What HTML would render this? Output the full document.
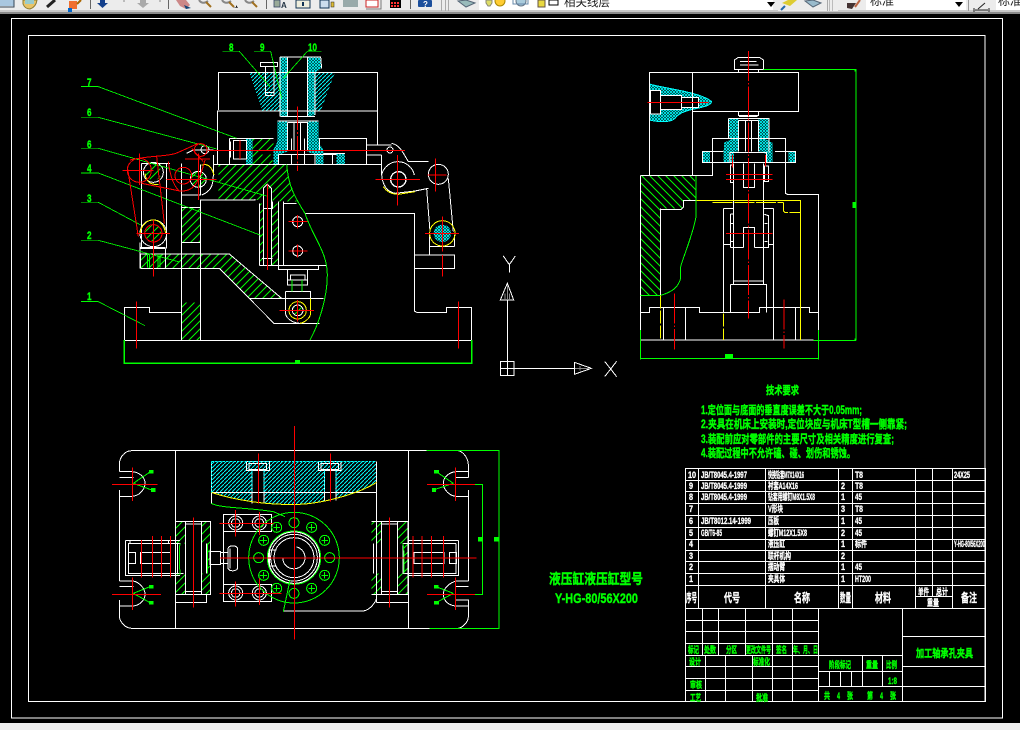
<!DOCTYPE html>
<html><head><meta charset="utf-8"><title>CAD</title>
<style>
html,body{margin:0;padding:0;background:#000;width:1020px;height:730px;overflow:hidden}
svg{display:block;position:absolute;left:0;top:0}
path.w,path.g,path.r,path.y,path.c,circle.w,circle.g,circle.r,circle.y{fill:none;stroke-width:3}
.w{stroke:#fff}.g{stroke:#0f0}.r{stroke:#f00}.y{stroke:#ff0}.c{stroke:#0ff}
.d{stroke-dasharray:70 6 6 6}
text{font-family:"Liberation Sans","Noto Sans CJK SC",sans-serif;font-weight:bold}
.tw text{fill:#fff;stroke:#fff;stroke-width:.35}
.tg text{fill:#0f0;stroke:#0f0;stroke-width:.4}
</style></head><body>
<svg width="1020" height="730" viewBox="0 0 1020 730" xmlns="http://www.w3.org/2000/svg">
<defs>
<pattern id="hg" width="24" height="24" patternUnits="userSpaceOnUse"><path d="M-2 26L26 -2M-2 2L2 -2M22 26L26 22" stroke="#0f0" stroke-width="3" fill="none"/></pattern>
<pattern id="hb" width="24" height="24" patternUnits="userSpaceOnUse"><path d="M-2 -2L26 26M22 -2L26 2M-2 22L2 26" stroke="#0f0" stroke-width="3" fill="none"/></pattern>
<pattern id="hc" width="9" height="9" patternUnits="userSpaceOnUse"><path d="M0 9L9 0M0 0L9 9" stroke="#0ff" stroke-width="2.400" fill="none"/></pattern>
<pattern id="hd" width="12" height="12" patternUnits="userSpaceOnUse"><path d="M-1 13L13 -1" stroke="#0ff" stroke-width="3" fill="none"/></pattern>
</defs>
<rect width="1020" height="730" fill="#000"/>

<!-- toolbar -->
<rect width="1020" height="11" fill="#ececec"/>
<rect y="10" width="1020" height="2" fill="#c8c8c8"/>
<rect y="12" width="1020" height="2" fill="#8a8a8a"/>
<rect x="0" y="0" width="14" height="6" fill="#a9c7e0"/><path d="M14 0V7H0" stroke="#345" fill="none"/>
<path d="M23 0V4Q25 9 30 9Q36 7 37 0Z" fill="#e8c468" stroke="#8a7a30"/><rect x="25" y="0" width="9" height="4" fill="#9cc"/>
<path d="M47 7L55 0" stroke="#222" stroke-width="3"/>
<rect x="69" y="1" width="8" height="8" fill="#f07030"/><rect x="68" y="8" width="4" height="4" fill="#06c"/><path d="M77 4L81 0" stroke="#a60" stroke-width="2"/>
<path d="M90.500 0V9" stroke="#666"/>
<path d="M100 0H105V3H108L102.500 8L97 3H100Z" fill="#14408c"/>
<path d="M140 0H146V3H149L143 8L137 3H140Z" fill="#aaa"/><rect x="123" y="0" width="2" height="2" fill="#bbb"/><rect x="159" y="0" width="2" height="2" fill="#bbb"/>
<path d="M168.500 0V9" stroke="#666"/>
<path d="M176 0H186L190 5L186 9L180 6Z" fill="#c88"/><path d="M184 5L191 8L186 9Z" fill="#147"/>
<g fill="none"><path d="M199 0Q202 5 208 1" stroke="#888" stroke-width="2"/><path d="M206 2L211 7" stroke-width="2" stroke="#a07020"/><path d="M222 0Q225 5 231 1" stroke="#888" stroke-width="2"/><path d="M229 2L234 7" stroke-width="2" stroke="#a07020"/><path d="M245 0Q248 5 254 1" stroke="#888" stroke-width="2"/><path d="M252 2L257 7" stroke-width="2" stroke="#a07020"/></g>
<path d="M233 7h3v-2l2 3z" fill="#000"/>
<path d="M266.500 0V9" stroke="#666"/>
<rect x="274" y="0" width="6" height="7" fill="#9a9" stroke="#346" stroke-width=".8"/><text x="281" y="8" font-size="8" fill="#234">A</text>
<rect x="296" y="0" width="14" height="8" fill="#eed" stroke="#135"/><rect x="302" y="2" width="2" height="4" fill="#135"/>
<rect x="320" y="0" width="9" height="8" fill="#cde" stroke="#135"/><rect x="331" y="2" width="3" height="5" fill="#db3" stroke="#222" stroke-width=".5"/>
<rect x="343" y="0" width="15" height="7" fill="#9aa"/>
<rect x="366" y="0" width="12" height="7" fill="#fff" stroke="#c22"/><path d="M381 0V9H366" stroke="#777" fill="none"/>
<rect x="390" y="0" width="11" height="8" fill="#000"/><g fill="#f33"><rect x="391" y="2" width="2" height="2"/><rect x="394" y="2" width="2" height="2"/><rect x="397" y="2" width="2" height="2"/><rect x="391" y="5" width="2" height="2"/><rect x="394" y="5" width="2" height="2"/><rect x="397" y="5" width="2" height="2"/></g>
<path d="M410.500 0V9" stroke="#666"/>
<rect x="418" y="0" width="14" height="7" rx="1" fill="#1c4f9c"/><text x="423" y="7" font-size="8" fill="#fff">?</text>
<path d="M441.500 0V11M445.500 0V11M448.500 0V11" stroke="#aaa"/>
<path d="M458 1L466 0L475 3L466 7Z" fill="#9bb" stroke="#567"/>
<rect x="479" y="0" width="294" height="10" fill="#fff"/>
<path d="M486 0H492V3L490 6H488L486 3Z" fill="#dd6" stroke="#887"/>
<circle cx="500" cy="1" r="5" fill="#fc3" stroke="#a80"/>
<circle cx="521" cy="1" r="5" fill="#acd" stroke="#678"/>
<path d="M513 0V4H528V0" stroke="#68a" fill="none"/>
<rect x="538" y="0" width="7" height="7" fill="#e8d840" stroke="#654"/>
<rect x="549" y="0" width="9" height="5" fill="#fff" stroke="#000"/>
<text x="564" y="6" font-size="12" fill="#222" style="font-weight:400" textLength="46" lengthAdjust="spacingAndGlyphs">相关线层</text>
<path d="M767 2H775L771 7Z" fill="#000"/>
<rect x="778" y="0" width="60" height="11" fill="#ececec"/>
<path d="M782 3L788 0H797L790 6Z" fill="#dc3"/><path d="M781 10L785 6" stroke="#26a" stroke-width="2"/>
<path d="M805 1L813 0L821 3L813 7Z" fill="#9bc" stroke="#567"/>
<path d="M827.500 0V11" stroke="#aaa"/><path d="M829.500 0V11M832.500 0V11" stroke="#bbb"/>
<path d="M847 3H856L852 9L847 8Z" fill="#433"/><path d="M855 7L860 0" stroke="#b64" stroke-width="2"/>
<rect x="866" y="0" width="100" height="10" fill="#fff"/>
<text x="870" y="5" font-size="12" fill="#222" style="font-weight:400">标准</text>
<path d="M955 2H963L959 7Z" fill="#000"/>
<path d="M968.500 0V11" stroke="#999"/>
<path d="M974 8V12M989 8V12M975 10H988M978 9L985 3" stroke="#222" fill="none"/>
<rect x="996" y="0" width="24" height="10" fill="#fff"/>
<text x="998" y="5" font-size="12" fill="#222" style="font-weight:400">标准</text>

<!-- bottom strip -->
<rect y="723" width="1020" height="7" fill="#f0f0f0"/>

<!-- frames -->
<g fill="none" stroke="#fff" stroke-width="1" shape-rendering="crispEdges">
<rect x="11.500" y="18.500" width="991" height="699.500"/>
<rect x="28.500" y="35.500" width="956.500" height="666"/>
</g>

<!-- MAIN VIEW -->
<g transform="translate(70,35) scale(.33333)" shape-rendering="crispEdges">
<path d="M538 112H630V230H578Z" fill="url(#hd)"/>
<path d="M735 112H795L752 228H735Z" fill="url(#hd)"/>
<path d="M630 66H652V245H632Z" fill="url(#hc)"/>
<path d="M712 66H752L755 100L735 112V240L712 245Z" fill="url(#hc)"/>
<path d="M622 258H652V350L625 360V388H610V345L622 320Z" fill="url(#hc)"/>
<path d="M712 258H745V320L760 345V388H738V360L712 350Z" fill="url(#hc)"/>
<path d="M528 310H548V388H528Z" fill="url(#hc)"/>
<path d="M800 355H825V388H800Z" fill="url(#hc)"/>
<path d="M548 310H610V345H568V388H548Z" fill="url(#hg)"/>
<path d="M566 358H608V388H566Z" fill="url(#hg)"/>
<path d="M445 388H650L656 425L680 500H608V460H578V495H445Z" fill="url(#hg)"/>
<path d="M335 517H392V622H335Z" fill="url(#hg)"/>
<path d="M335 802H392V915H335Z" fill="url(#hg)"/>
<path d="M212 657H478L635 790H540L448 700H212Z" fill="url(#hg)"/>
<path d="M568 505H580V692H568ZM604 505H625V692H604Z" fill="url(#hg)"/>
<circle cx="250" cy="595" r="24" fill="url(#hg)"/>
<circle cx="385" cy="433" r="24" fill="url(#hg)"/>
<circle cx="250" cy="412" r="24" fill="url(#hg)"/>
<circle cx="1117" cy="595" r="26" fill="url(#hc)"/>
<circle cx="683" cy="826" r="14" fill="url(#hg)"/>
<path class="w" d="M445 225V112H922V228M442 390V228H922V330"/>
<path class="w" d="M572 82H622V94H572ZM586 94V182H612V94M586 172H612"/>
<path class="w" d="M630 66H752L755 100M652 66V245M712 66V245M632 245H735M630 66V245M735 112V240"/>
<path class="w" d="M622 258H745M652 262H712V345M652 262V345M672 262V345M692 262V345"/>
<path class="w" d="M478 310H610M745 310H890V388M748 310V345M665 310V345M703 310V358M430 388H935M430 360V388M478 310V388M490 316H530V372H490ZM482 320V368"/>
<path class="w" d="M625 358H800M625 388V358M665 358V388M703 358V388M735 358V388M760 355H825M788 355V388"/>
<path class="w" d="M890 330H965M890 360H935"/>
<path class="w" d="M392 915V495H555V492M335 480V915M335 517H392M335 622H392"/>
<path class="w" d="M212 657H478L635 790M212 700H448L612 865H748M212 657V700M540 790H760"/>
<path class="w" d="M568 505V692M580 460V692H604V460L592 448ZM580 520H608V500M576 670H608M568 692H770M625 500V692M640 500V692M640 505H680"/>
<path class="w" d="M625 692H745V703H625ZM653 703H712V735M653 703V735M653 750H712V735H653ZM662 720H705V735H662Z"/>
<path class="w" d="M646 770H722V790M646 770V835C650 855 675 865 690 865"/>
<circle class="w" cx="683" cy="560" r="15"/><circle class="w" cx="683" cy="648" r="15"/>
<circle class="y" cx="683" cy="826" r="26"/>
<circle class="w" cx="683" cy="826" r="16"/>
<path class="y" d="M722 790V835C720 850 705 862 690 865"/>
<path class="w" d="M163 915V818H238V832H335M1205 915V818H1130V832H1040L1033 828V535H705M163 916H1205M1033 660H1153V700H1033"/>
<path class="w" d="M1078 660V635H1153M1078 635V600M1153 635V600"/>
<path class="w" d="M935 360V420C938 450 950 470 975 475L1035 468L1075 460M1070 462L1080 590M1135 430L1150 590M965 325C990 330 1000 355 1015 380H1075"/>
<circle class="w" cx="1105" cy="418" r="30"/>
<path class="w" d="M935 420A50 50 0 0 1 1033 420"/>
<circle class="w" cx="985" cy="433" r="23" style="stroke-width:4"/>
<circle class="w" cx="960" cy="345" r="9"/>
<circle class="y" cx="1117" cy="595" r="38"/>
<path class="y" d="M940 455C950 470 965 478 985 478L1035 470"/>
<path class="w" d="M215 385H300M215 385V640M290 385V640M210 640V700M287 640V700M210 622V640H287M210 637H287"/>
<path class="w" d="M335 385V480H392V388M350 355L370 345H430M395 480C420 470 430 455 430 420V388"/>
<circle class="w" cx="250" cy="412" r="30"/><circle class="w" cx="385" cy="433" r="24"/><circle class="w" cx="250" cy="595" r="40"/><circle class="w" cx="405" cy="344" r="12"/>
<path class="y" d="M225 415C228 440 240 450 265 448M210 595C215 565 235 555 250 555C268 555 283 570 287 595M395 390C415 385 425 395 432 420"/>
<path class="g" d="M650 388C655 450 670 480 705 535C730 610 772 650 772 720C772 790 745 870 720 915"/>
<path class="g" d="M232 657V697M238 657V697M264 657V697M270 657V697"/>
<path class="g" d="M666 735V770M696 735V770"/>
<path class="g" d="M457 49H508L600 155M552 49H602L635 190M755 49H712L640 130M33 155H85L500 310M33 247H85L440 342M33 340H85L590 483M33 414H85L575 602M33 502H85L212 570M33 616H85L325 680M33 800H85L225 872" style="stroke-width:2.500"/>
<path class="g" d="M163 915V985H1205V915" style="stroke-width:4"/>
<rect x="675" y="975" width="15" height="10" fill="#0f0"/>
<path class="r d" d="M682 215V408"/>
<path class="r" d="M415 346H1005"/>
<path class="r" d="M510 316V372M592 448V705"/>
<path class="r" d="M655 560H712M683 540V580M655 648H712M683 628V668"/>
<path class="r" d="M628 826H732M683 795V860"/>
<path class="r" d="M200 800V940M1165 800V940"/>
<path class="r" d="M916 433H1050M982 360V512"/>
<path class="r" d="M1073 420H1130M1097 370V470"/>
<path class="r" d="M1065 595H1167M1117 545V650M1117 660V725"/>
<path class="r" d="M250 640V725M250 555V640M200 595H300"/>
<path class="r" d="M157 406H250M208 355V450"/>
<path class="r" d="M290 433H440M385 355V495"/>
<circle class="r" cx="250" cy="595" r="26"/>
<circle class="r" cx="208" cy="406" r="36"/>
<circle class="r" cx="340" cy="422" r="25"/>
<circle class="r" cx="392" cy="345" r="19"/>
<path class="r" d="M172 395L205 605M260 365L283 565M180 375C230 362 300 365 325 352L385 325M215 445L330 468C370 470 385 450 405 375M295 380C300 420 310 450 325 465M365 340L400 380M345 372H420"/>
</g>
<g class="tg" font-size="11">
<text x="229" y="51" textLength="4.500" lengthAdjust="spacingAndGlyphs">8</text>
<text x="260" y="51" textLength="4.500" lengthAdjust="spacingAndGlyphs">9</text>
<text x="308" y="51" textLength="9" lengthAdjust="spacingAndGlyphs">10</text>
<text x="87" y="86" textLength="4.500" lengthAdjust="spacingAndGlyphs">7</text>
<text x="87" y="116" textLength="4.500" lengthAdjust="spacingAndGlyphs">6</text>
<text x="87" y="148" textLength="4.500" lengthAdjust="spacingAndGlyphs">6</text>
<text x="87" y="172" textLength="4.500" lengthAdjust="spacingAndGlyphs">4</text>
<text x="87" y="202" textLength="4.500" lengthAdjust="spacingAndGlyphs">3</text>
<text x="87" y="239" textLength="4.500" lengthAdjust="spacingAndGlyphs">2</text>
<text x="87" y="300" textLength="4.500" lengthAdjust="spacingAndGlyphs">1</text>
</g>

<!-- RIGHT VIEW -->
<g transform="translate(620,50) scale(.33333)" shape-rendering="crispEdges">
<path d="M88 102C130 115 240 125 275 155C265 180 190 170 165 205C150 220 110 215 88 210Z" fill="url(#hc)"/>
<path d="M122 137H184V178H122ZM184 142H236V172H184ZM92 122H122V192H92Z" fill="#000"/>
<path d="M326 205H356V305H342V270L326 265Z" fill="url(#hc)"/>
<path d="M415 205H447V265L430 270V305H415Z" fill="url(#hc)"/>
<path d="M312 278L342 265V338H310Z" fill="url(#hc)"/><path d="M430 265L458 278V338H440V310H430Z" fill="url(#hc)"/>
<path d="M247 304H270V338H247ZM505 304H527V338H505Z" fill="url(#hc)"/>
<path d="M61 376H225V400L230 450H190V476H122V736H61Z" fill="url(#hb)"/>
<path class="c" d="M88 102C130 115 240 125 275 155C265 180 190 170 165 205C150 220 110 215 88 210"/>
<path class="w" d="M343 30L355 22H418L430 30V58H343ZM355 58V67M415 58V67M360 45H415M360 35H410"/>
<path class="w" d="M88 376V67H535V184H217M217 67V376M61 376H278V338H330M122 137H184V178H122M184 142H236V172H184M92 122H122V192H92Z"/>
<path class="w" d="M355 184V197H415V184M357 200H413"/>
<path class="w" d="M326 205H447V308M326 205V265M356 212H415M356 212V305M376 212V305M394 212V305M415 212V305"/>
<path class="w" d="M278 338V265H496V430L502 433H595V870M278 304H247V338H527V304H465M278 304H310M496 304H505M330 338V308H440V338"/>
<path class="w" d="M61 376V870M61 870H580"/>
<path class="w" d="M61 787H88V772H238V787H418V772H568V787H595M130 772V870M196 772V870M460 475V870M526 772V870"/>
<path class="w" d="M310 475H340M310 475V787M460 475H430M340 340V693M430 340V693M340 693H430V703M340 703V693M331 703H440V787M331 703V787"/>
<path class="w" d="M370 340V412H404V340M370 593V532H404V593M331 593H370M404 593H446V497L433 493M331 492V593M310 583H331M446 583H460M340 492H331M340 520H331M340 575H331M433 520H442M433 575H442"/>
<path class="w" d="M331 345H340V398H331ZM433 348H446V395H433Z"/>
<path class="w" d="M122 476V736M122 478H184L190 472V451H230"/>
<path class="g" d="M228 378V500C220 550 190 620 182 650V685C175 710 160 725 122 736M61 736H122"/>
<path class="y" d="M230 451H541V870M271 452H500M278 457H490" stroke-dasharray="60 5"/>
<path class="y" d="M230 451H380"/>
<path class="y" d="M122 736V870M310 790V870M490 458V482L494 487H541" stroke-dasharray="40 5"/>
<path class="y" d="M505 451H541M541 451V870" stroke-dasharray="90 5"/>
<path class="r" d="M385 3V805" stroke-dasharray="90 6 5 6"/>
<path class="r" d="M163 730V898M492 748V895" stroke-dasharray="90 6 5 6"/>
<path class="r" d="M82 157H265M318 373H458M318 388H458M318 550H458M338 315V352M437 315V350"/>
<path class="g" d="M430 58H708V868M580 871H708M61 840V928M595 840V928M61 925H595"/>
<rect x="315" y="912" width="24" height="13" fill="#0f0"/>
<rect x="697" y="456" width="9" height="18" fill="#0f0"/>
<rect x="704" y="58" width="6" height="6" fill="#0f0"/><rect x="704" y="865" width="6" height="6" fill="#0f0"/>
</g>

<!-- BOTTOM VIEW -->
<g transform="translate(100,420) scale(.33333)" shape-rendering="crispEdges">
<path d="M334 124H830V187C770 225 650 255 580 253C500 255 400 240 334 217Z" fill="url(#hd)"/>
<path d="M456 152H492V250H456ZM674 152H708V242H674Z" fill="#000"/>
<path d="M227 304H257V524H227ZM304 304H332V524H304ZM814 304H844V524H814ZM893 304H924V524H893Z" fill="url(#hg)"/>
<path d="M227 370H257V460H227ZM814 370H844V460H814ZM893 370H909V460H893ZM304 370H322V460H304Z" fill="#000"/>
<path class="w" d="M58 155V130C60 110 75 92 95 92H1075C1090 95 1105 115 1105 135V172M58 155H95C115 155 135 170 135 190C135 210 115 229 95 229H58V210M58 172H100M58 229V210M1105 155H1070C1050 155 1030 170 1030 190C1030 210 1050 229 1070 229H1105V210M1065 172H1105"/>
<path class="w" d="M58 229V483M1105 229V483"/>
<path class="w" d="M58 483H100C118 487 135 505 135 522C135 545 115 558 95 558H58V540M58 500H100M58 558V590C60 605 75 625 95 625H1075C1090 622 1105 605 1105 590V540H1065M1105 483H1070C1050 487 1030 505 1030 522C1030 545 1050 558 1070 558H1105V540M1065 500H1105"/>
<path class="w" d="M227 92V625M925 92V625"/>
<path class="w" d="M334 124V250M334 217H830M830 124V217M830 187V530C830 545 810 570 790 573H550M440 124H508V152H440ZM655 124H723V152H655ZM447 130H500V148H447ZM663 130H715V148H663ZM456 152V250M492 152V250M674 152V242M708 152V242M456 217H492M674 217H708"/>
<path class="w" d="M227 304H332V524H227M257 304V524M304 304V524M257 312H304M257 515H304M227 370H242M320 370V460M227 460H250M227 524V548H320V524"/>
<path class="w" d="M814 304H924V524H814M844 304V524M893 304V524M844 312H893M844 515H893M924 370H909V460H924M820 370V460M830 548H924M830 524V548"/>
<path class="w" d="M76 361H240M76 361V467H240M85 370H232V460H85ZM85 397H107V430H85ZM122 397H212V430H122ZM160 461H225M90 361V370M205 361V370"/>
<path class="w" d="M1076 361H925M1076 361V467H925M1068 370H925M1068 370V460H925M1048 397H1070V430H1048ZM942 397H1032V430H942ZM960 461H1040"/>
<path class="w" d="M330 394H362V434H330ZM362 398H384V430H362ZM384 385C388 375 408 375 413 385V445C408 455 388 455 384 445ZM390 385V445"/>
<path class="w" d="M370 283H515V335H370ZM370 335V493M370 493H515V545H370Z"/>
<circle class="w" cx="407" cy="309" r="21"/><circle class="w" cx="407" cy="309" r="13"/>
<circle class="w" cx="478" cy="309" r="21"/><circle class="w" cx="478" cy="309" r="13"/>
<circle class="w" cx="407" cy="519" r="21"/><circle class="w" cx="407" cy="519" r="13"/>
<circle class="w" cx="478" cy="519" r="21"/><circle class="w" cx="478" cy="519" r="13"/>
<circle class="w" cx="582" cy="413" r="77"/><circle class="w" cx="582" cy="413" r="70"/><circle class="w" cx="582" cy="413" r="60"/>
<path class="w" d="M548 413A33 33 0 0 0 615 413A33 33 0 0 0 590 381"/>
<path class="w" d="M508 390H530M508 390V438H530"/>
<path class="y" d="M334 217C400 240 500 255 580 253C650 255 770 225 830 187"/>
<path class="c" d="M334 124H830M334 124V217M456 152V217M674 152V217M492 152V217M708 152V217" style="stroke-dasharray:8 3"/>
<path class="g" d="M334 250C360 265 440 262 520 275L555 290"/>
<circle class="g" cx="582" cy="413" r="136"/><circle class="g" cx="582" cy="413" r="80"/>
<circle class="g" cx="582" cy="308" r="15"/><circle class="g" cx="635" cy="322" r="15"/><circle class="g" cx="674" cy="361" r="15"/><circle class="g" cx="689" cy="413" r="15"/><circle class="g" cx="674" cy="466" r="15"/><circle class="g" cx="635" cy="505" r="15"/><circle class="g" cx="582" cy="520" r="15"/><circle class="g" cx="530" cy="505" r="15"/><circle class="g" cx="491" cy="466" r="15"/><circle class="g" cx="476" cy="413" r="15"/><circle class="g" cx="491" cy="361" r="15"/><circle class="g" cx="530" cy="322" r="15"/>
<path class="g" d="M625 322H645M635 312V332M664 361H684M674 351V371M479 361H501M491 351V371M479 466H501M491 456V476M664 466H684M674 456V476M625 505H645M635 495V515M520 505H540M530 495V515M520 322H540M530 312V332"/>
<path class="g" d="M550 575L570 480M240 370C235 410 240 450 240 465M322 370V460M909 370C915 410 912 450 912 460"/>
<path class="g" d="M980 92H1197V625H988M1125 193H1148V523H1125"/>
<rect x="1134" y="351" width="14" height="14" fill="#0f0"/><rect x="1182" y="351" width="14" height="14" fill="#0f0"/>
<path class="g" d="M100 190L150 156M100 190L155 210M100 520L150 500M100 520L150 548M1060 190L1010 156M1060 190L1000 210M1060 520L1008 500M1060 520L1008 548"/>
<g fill="#0f0"><rect x="147" y="150" width="13" height="11"/><rect x="153" y="204" width="14" height="12"/><rect x="147" y="495" width="13" height="11"/><rect x="147" y="543" width="13" height="11"/><rect x="1002" y="150" width="15" height="11"/><rect x="996" y="204" width="12" height="12"/><rect x="1002" y="495" width="14" height="11"/><rect x="1002" y="543" width="15" height="11"/></g>
<path class="r" d="M583 18V658M475 100V250M691 100V245M360 414H1130M36 193H173M97 143V243M36 523H183M97 472V570M981 193H1125M1066 143V243M981 523H1125M1066 472V570"/>
<path class="r" d="M280 292V562M868 292V562M124 360V473M157 348V473M184 348V473M211 348V473M939 348V473M966 348V473M994 348V473M1030 348V473"/>
<path class="r" d="M358 310H456M407 270V350M440 310H520M478 276V345M358 520H456M407 484V560M440 520H545M478 476V555"/>
</g>

<!-- UCS icon -->
<g transform="translate(490,240) scale(.33333)" shape-rendering="crispEdges">
<path class="w" d="M52 180V364M72 385H252M31 364H72V407H31ZM31 385H72M52 364V407"/>
<path class="w" d="M52 130L31 180H71ZM253 367V403L304 385Z"/>
<path d="M52 135V180M45 160V180M59 160V180M255 385H300M270 378V392" stroke="#888" stroke-width="3" fill="none"/>
<path class="w" d="M40 48L58 74L76 48M58 74V98M344 364L380 410M380 364L344 410"/>
</g>

<!-- tech text -->
<g class="tg">
<text x="766" y="394" font-size="11" textLength="33" lengthAdjust="spacingAndGlyphs">技术要求</text>
<text x="701" y="414" font-size="11.500" textLength="161" lengthAdjust="spacingAndGlyphs">1.定位面与底面的垂直度误差不大于0.05mm;</text>
<text x="701" y="428" font-size="11.500" textLength="206" lengthAdjust="spacingAndGlyphs">2.夹具在机床上安装时,定位块应与机床T型槽一侧靠紧;</text>
<text x="701" y="443" font-size="11.500" textLength="193" lengthAdjust="spacingAndGlyphs">3.装配前应对零部件的主要尺寸及相关精度进行复查;</text>
<text x="701" y="457" font-size="11.500" textLength="154" lengthAdjust="spacingAndGlyphs">4.装配过程中不允许磕、碰、划伤和锈蚀。</text>
<text x="549" y="584" font-size="14" textLength="94" lengthAdjust="spacingAndGlyphs">液压缸液压缸型号</text>
<text x="555" y="603" font-size="14" textLength="83" lengthAdjust="spacingAndGlyphs">Y-HG-80/56X200</text>
</g>

<!-- TABLE -->
<g fill="none" stroke="#fff" stroke-width="1" shape-rendering="crispEdges">
<path d="M685.500 468.500H985.500V701.500H685.500Z"/>
<path d="M685.500 480.500H985.500M685.500 491.500H985.500M685.500 503.500H985.500M685.500 515.500H985.500M685.500 527.500H985.500M685.500 539.500H985.500M685.500 550.500H985.500M685.500 561.500H985.500M685.500 573.500H985.500M685.500 585.500H985.500M685.500 608.500H985.500"/>
<path d="M698.500 468.500V608.500M765.500 468.500V608.500M838.500 468.500V608.500M852.500 468.500V608.500M915.500 468.500V608.500M932.500 468.500V596.500M952.500 468.500V608.500M915.500 596.500H952.500"/>
<path d="M702.500 608.500V655.500M718.500 608.500V655.500M745.500 608.500V655.500M772.500 608.500V655.500M792.500 608.500V655.500"/>
<path d="M685.500 620.500H818.500M685.500 631.500H818.500M685.500 643.500H818.500M685.500 655.500H902.500M685.500 666.500H818.500M685.500 678.500H818.500M685.500 690.500H818.500"/>
<path d="M705.500 655.500V701.500M725.500 655.500V701.500M752.500 655.500V701.500M772.500 655.500V701.500M792.500 655.500V701.500M818.500 608.500V701.500"/>
<path d="M818.500 671.500H902.500M818.500 686.500H902.500M862.500 655.500V686.500M882.500 655.500V686.500M829.500 671.500V686.500M840.500 671.500V686.500M851.500 671.500V686.500"/>
<path d="M902.500 608.500V701.500M902.500 636.500H985.500M902.500 666.500H985.500M902.500 686.500H985.500"/>
</g>
<g class="tw" font-size="9">
<text x="688" y="478" textLength="8" lengthAdjust="spacingAndGlyphs">10</text>
<text x="689" y="489" textLength="4" lengthAdjust="spacingAndGlyphs">9</text><text x="689" y="500" textLength="4" lengthAdjust="spacingAndGlyphs">8</text><text x="689" y="512" textLength="4" lengthAdjust="spacingAndGlyphs">7</text><text x="689" y="524" textLength="4" lengthAdjust="spacingAndGlyphs">6</text><text x="689" y="536" textLength="4" lengthAdjust="spacingAndGlyphs">5</text><text x="689" y="547" textLength="4" lengthAdjust="spacingAndGlyphs">4</text><text x="689" y="559" textLength="4" lengthAdjust="spacingAndGlyphs">3</text><text x="689" y="570" textLength="4" lengthAdjust="spacingAndGlyphs">2</text><text x="689" y="582" textLength="4" lengthAdjust="spacingAndGlyphs">1</text>
<text x="701" y="478" textLength="46" lengthAdjust="spacingAndGlyphs">JB/T8045.4-1997</text>
<text x="701" y="489" textLength="46" lengthAdjust="spacingAndGlyphs">JB/T8045.4-1999</text>
<text x="701" y="500" textLength="46" lengthAdjust="spacingAndGlyphs">JB/T8045.4-1999</text>
<text x="701" y="524" textLength="50" lengthAdjust="spacingAndGlyphs">JB/T8012.14-1999</text>
<text x="701" y="536" textLength="21" lengthAdjust="spacingAndGlyphs">GB/T6-85</text>
<text x="768" y="478" textLength="36" lengthAdjust="spacingAndGlyphs">快换钻套M7X14X16</text>
<text x="768" y="489" textLength="30" lengthAdjust="spacingAndGlyphs">衬套A14X16</text>
<text x="768" y="500" textLength="47" lengthAdjust="spacingAndGlyphs">钻套用螺钉M8X1.5X8</text>
<text x="768" y="512" textLength="15" lengthAdjust="spacingAndGlyphs">V形块</text>
<text x="768" y="524" textLength="11" lengthAdjust="spacingAndGlyphs">压板</text>
<text x="768" y="536" textLength="39" lengthAdjust="spacingAndGlyphs">螺钉M12X1.5X8</text>
<text x="768" y="547" textLength="17" lengthAdjust="spacingAndGlyphs">液压缸</text>
<text x="768" y="559" textLength="23" lengthAdjust="spacingAndGlyphs">联杆机构</text>
<text x="768" y="570" textLength="17" lengthAdjust="spacingAndGlyphs">摆动臂</text>
<text x="768" y="582" textLength="17" lengthAdjust="spacingAndGlyphs">夹具体</text>
<text x="841" y="489" textLength="4" lengthAdjust="spacingAndGlyphs">2</text><text x="841" y="500" textLength="4" lengthAdjust="spacingAndGlyphs">1</text><text x="841" y="512" textLength="4" lengthAdjust="spacingAndGlyphs">3</text><text x="841" y="524" textLength="4" lengthAdjust="spacingAndGlyphs">1</text><text x="841" y="536" textLength="4" lengthAdjust="spacingAndGlyphs">2</text><text x="841" y="547" textLength="4" lengthAdjust="spacingAndGlyphs">1</text><text x="841" y="559" textLength="4" lengthAdjust="spacingAndGlyphs">2</text><text x="841" y="570" textLength="4" lengthAdjust="spacingAndGlyphs">1</text><text x="841" y="582" textLength="4" lengthAdjust="spacingAndGlyphs">1</text>
<text x="855" y="478" textLength="8" lengthAdjust="spacingAndGlyphs">T8</text>
<text x="855" y="489" textLength="8" lengthAdjust="spacingAndGlyphs">T8</text>
<text x="855" y="500" textLength="7" lengthAdjust="spacingAndGlyphs">45</text>
<text x="855" y="512" textLength="8" lengthAdjust="spacingAndGlyphs">T8</text>
<text x="855" y="524" textLength="7" lengthAdjust="spacingAndGlyphs">45</text>
<text x="855" y="536" textLength="7" lengthAdjust="spacingAndGlyphs">45</text>
<text x="855" y="547" textLength="12" lengthAdjust="spacingAndGlyphs">标件</text>
<text x="855" y="570" textLength="7" lengthAdjust="spacingAndGlyphs">45</text>
<text x="855" y="582" textLength="16" lengthAdjust="spacingAndGlyphs">HT200</text>
<text x="954" y="478" textLength="16" lengthAdjust="spacingAndGlyphs">24X25</text>
<text x="954" y="547" textLength="31" lengthAdjust="spacingAndGlyphs">Y-HG-80/56X200</text>
<text x="686" y="602" font-size="12" textLength="11" lengthAdjust="spacingAndGlyphs">序号</text>
<text x="724" y="602" font-size="12" textLength="16" lengthAdjust="spacingAndGlyphs">代号</text>
<text x="794" y="602" font-size="12" textLength="16" lengthAdjust="spacingAndGlyphs">名称</text>
<text x="840" y="602" font-size="12" textLength="11" lengthAdjust="spacingAndGlyphs">数量</text>
<text x="875" y="602" font-size="12" textLength="16" lengthAdjust="spacingAndGlyphs">材料</text>
<text x="918" y="595" font-size="9" textLength="11" lengthAdjust="spacingAndGlyphs">单件</text>
<text x="936" y="595" font-size="9" textLength="12" lengthAdjust="spacingAndGlyphs">总计</text>
<text x="927" y="606" font-size="9" textLength="12" lengthAdjust="spacingAndGlyphs">重量</text>
<text x="961" y="602" font-size="12" textLength="16" lengthAdjust="spacingAndGlyphs">备注</text>
</g>
<g class="tg" font-size="9">
<text x="688" y="653" textLength="11" lengthAdjust="spacingAndGlyphs">标记</text>
<text x="704" y="653" textLength="12" lengthAdjust="spacingAndGlyphs">处数</text>
<text x="726" y="653" textLength="11" lengthAdjust="spacingAndGlyphs">分区</text>
<text x="746" y="653" textLength="25" lengthAdjust="spacingAndGlyphs">更改文件号</text>
<text x="776" y="653" textLength="11" lengthAdjust="spacingAndGlyphs">签名</text>
<text x="793" y="653" textLength="25" lengthAdjust="spacingAndGlyphs">年、月、日</text>
<text x="689" y="665" textLength="12" lengthAdjust="spacingAndGlyphs">设计</text>
<text x="753" y="665" textLength="17" lengthAdjust="spacingAndGlyphs">标准化</text>
<text x="690" y="688" textLength="12" lengthAdjust="spacingAndGlyphs">审核</text>
<text x="690" y="701" textLength="11" lengthAdjust="spacingAndGlyphs">工艺</text>
<text x="756" y="701" textLength="12" lengthAdjust="spacingAndGlyphs">批准</text>
<text x="829" y="668" textLength="22" lengthAdjust="spacingAndGlyphs">阶段标记</text>
<text x="866" y="668" textLength="12" lengthAdjust="spacingAndGlyphs">重量</text>
<text x="886" y="668" textLength="11" lengthAdjust="spacingAndGlyphs">比例</text>
<text x="888" y="684" textLength="9" lengthAdjust="spacingAndGlyphs">1:8</text>
<text x="824" y="699" textLength="6" lengthAdjust="spacingAndGlyphs">共</text>
<text x="837" y="699" textLength="3" lengthAdjust="spacingAndGlyphs">4</text>
<text x="847" y="699" textLength="6" lengthAdjust="spacingAndGlyphs">张</text>
<text x="867" y="699" textLength="6" lengthAdjust="spacingAndGlyphs">第</text>
<text x="880" y="699" textLength="3" lengthAdjust="spacingAndGlyphs">4</text>
<text x="890" y="699" textLength="6" lengthAdjust="spacingAndGlyphs">张</text>
<text x="916" y="657" font-size="11" textLength="57" lengthAdjust="spacingAndGlyphs">加工轴承孔夹具</text>
</g>
</svg>
</body></html>
